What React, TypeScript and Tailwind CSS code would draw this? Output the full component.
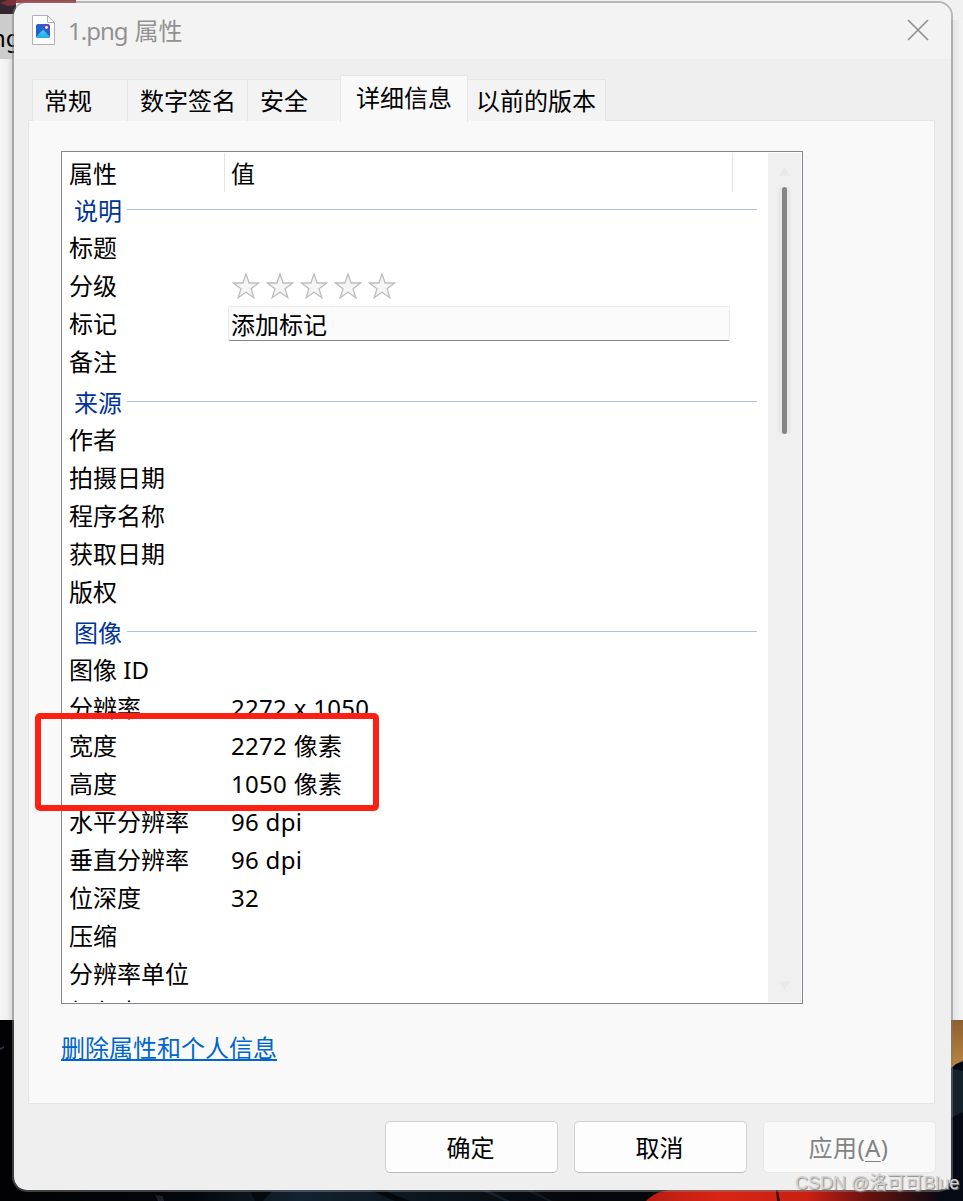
import React from 'react';

interface Property {
  name: string;
  value?: string;
  kind?: 'rating' | 'tags';
}

interface Section {
  title: string;
  rows: Property[];
}

const tabs = [
  { label: '常规', className: 'w-[95px] pl-[11px]' },
  { label: '数字签名', className: 'w-[120px] pl-[12px]' },
  { label: '安全', className: 'w-[93px] pl-[12px]' },
  { label: '详细信息', active: true, className: 'w-[128px] pl-[15px]' },
  { label: '以前的版本', className: 'w-[138px] pl-[8px]' },
];

const sections: Section[] = [
  {
    title: '说明',
    rows: [
      { name: '标题' },
      { name: '分级', kind: 'rating' },
      { name: '标记', kind: 'tags' },
      { name: '备注' },
    ],
  },
  {
    title: '来源',
    rows: [
      { name: '作者' },
      { name: '拍摄日期' },
      { name: '程序名称' },
      { name: '获取日期' },
      { name: '版权' },
    ],
  },
  {
    title: '图像',
    rows: [
      { name: '图像 ID' },
      { name: '分辨率', value: '2272 x 1050' },
      { name: '宽度', value: '2272 像素' },
      { name: '高度', value: '1050 像素' },
      { name: '水平分辨率', value: '96 dpi' },
      { name: '垂直分辨率', value: '96 dpi' },
      { name: '位深度', value: '32' },
      { name: '压缩' },
      { name: '分辨率单位' },
      { name: '颜色表示' },
    ],
  },
];

const Desktop: React.FC = () => (
  <svg className="absolute inset-0" width="963" height="1201" viewBox="0 0 963 1201">
    <defs>
      <linearGradient id="leftShade">
        <stop offset="0" stopColor="#f6f6f6" />
        <stop offset="0.5" stopColor="#f0f0f0" />
        <stop offset="1" stopColor="#d2d2d2" />
      </linearGradient>
      <linearGradient id="rightShade">
        <stop offset="0" stopColor="#dedede" />
        <stop offset="1" stopColor="#f5f5f5" />
      </linearGradient>
      <linearGradient id="amber" x1="0" y1="0" x2="0" y2="1">
        <stop offset="0" stopColor="#8b602f" />
        <stop offset="1" stopColor="#bd8641" />
      </linearGradient>
      <linearGradient id="red">
        <stop offset="0" stopColor="#b81d10" />
        <stop offset="0.25" stopColor="#d92415" />
        <stop offset="0.55" stopColor="#c82012" />
        <stop offset="0.75" stopColor="#6a120f" />
        <stop offset="1" stopColor="#0a0a12" />
      </linearGradient>
      <linearGradient id="night">
        <stop offset="0" stopColor="#020204" />
        <stop offset="0.2" stopColor="#03060a" />
        <stop offset="0.31" stopColor="#13222f" />
        <stop offset="0.45" stopColor="#0b141d" />
        <stop offset="0.6" stopColor="#050609" />
        <stop offset="1" stopColor="#060a14" />
      </linearGradient>
    </defs>
    <rect width="963" height="1201" fill="#f1f1f1" />
    <rect width="76" height="3" fill="#a34446" />
    <rect width="16" height="14" fill="#352631" />
    <path d="M0 3L8 0H16V5L8 6Z" fill="#7c3039" />
    <rect y="14" width="16" height="45" fill="#cccccc" />
    <rect y="59" width="14" height="962" fill="url(#leftShade)" />
    <rect x="950" y="20" width="13" height="1000" fill="url(#rightShade)" />
    <rect y="1020" width="963" height="181" fill="url(#night)" />
    <path d="M0 1048L4 1046V1048L0 1050Z" fill="#34383c" />
    <path d="M950 1020H963V1061L956 1064L950 1069Z" fill="url(#amber)" />
    <path d="M950 1068L963 1071V1112L950 1118Z" fill="#14222b" />
    <path d="M646 1201C652 1195 660 1190 672 1190H940V1201Z" fill="url(#red)" />
    <path d="M776 1190L777 1201H780L778 1190Z" fill="#3b0908" />
    <path d="M155 1195L163 1196L164 1201H158Z" fill="#1f1d27" />
    <path d="M250 1191H272L263 1201H255Z" fill="#05080c" />
    <path d="M370 1190L395 1201H410L382 1190Z" fill="#04070b" />
    <path d="M480 1190L505 1201H510L488 1190Z" fill="#16202a" />
    <path d="M525 1190L548 1201H552L532 1190Z" fill="#111a22" />
  </svg>
);

const FileIcon: React.FC = () => (
  <svg className="mb-[2px]" width="24" height="31" viewBox="0 0 24 31" fill="none">
    <defs>
      <linearGradient id="photo" x1="0" y1="1" x2="1" y2="0">
        <stop offset="0" stopColor="#0a62c9" />
        <stop offset="0.55" stopColor="#2563c8" />
        <stop offset="1" stopColor="#6a3fb8" />
      </linearGradient>
      <linearGradient id="hill" x1="0" y1="0" x2="0" y2="1">
        <stop offset="0" stopColor="#43cdf4" />
        <stop offset="1" stopColor="#22a7e8" />
      </linearGradient>
    </defs>
    <path d="M.5.5H15.5L22.5 7.5V29.5H.5Z" fill="#fdfdfd" stroke="#b1b1b1" />
    <path d="M15.5.5V7.5H22.5" stroke="#b1b1b1" />
    <rect x="4" y="9" width="14" height="14" rx="2" fill="url(#photo)" />
    <path d="M4.5 21.5L10 15.6Q11 14.6 12 15.6L17.5 21.5Q17 23 16 23H6Q5 23 4.5 21.5Z" fill="url(#hill)" />
    <circle cx="14.5" cy="12.5" r="1.4" fill="#f3eaff" />
  </svg>
);

const Rating: React.FC = () => (
  <div className="mb-[2px] flex gap-[6px] pl-px">
    {[1, 2, 3, 4, 5].map((n) => (
      <svg key={n} width="28" height="28" viewBox="0 0 28 28">
        <path
          d="M14 2L17.1 11H26.6L19.1 16.7L21.8 25.7L14 20.3L6.2 25.7L8.9 16.7L1.4 11H10.9Z"
          fill="#f5f5f5"
          stroke="#bdbdbd"
          strokeWidth="1.3"
        />
      </svg>
    ))}
  </div>
);

const PropertyRow: React.FC<{ row: Property }> = ({ row }) => (
  <div className="flex h-[38px] shrink-0 items-center">
    <div className="w-[162px] shrink-0 pb-[2px]">{row.name}</div>
    {row.kind === 'rating' && <Rating />}
    {row.kind === 'tags' && (
      <div className="-ml-[3px] mb-[3px] flex h-[35px] w-[502px] items-center rounded-[2px] border border-[#ebebeb] border-b-[#858585] bg-[#fafafa] pl-[2px] pt-[2px]">
        添加标记
      </div>
    )}
    {row.value && <div className="pb-[2px] tracking-[0.3px]">{row.value}</div>}
  </div>
);

const App: React.FC = () => {
  return (
    <div className="relative h-[1201px] w-[963px] overflow-hidden pl-3 pt-px font-['Noto_Sans','Noto_Sans_CJK_SC',sans-serif] text-2xl leading-[36px] text-black">
      <Desktop />
      <div className="absolute -left-[9px] top-[20px]">ng</div>

      <div className="relative flex h-[1191px] w-[941px] flex-col overflow-hidden rounded-[15px] border-2 border-[#7b7b7b]/50 bg-[#efefef] bg-clip-padding">
        <div className="flex h-14 shrink-0 items-center bg-[#f3f3f3] pl-[18px] pr-[22px] text-[#929292]">
          <FileIcon />
          <h1 className="ml-[12px] flex-1 pb-px">
            <span className="mr-[7px] tracking-[-1px]">1.png</span>
            属性
          </h1>
          <svg className="mb-[2px]" width="22" height="22" viewBox="0 0 22 22" fill="none" stroke="#919191" strokeWidth="1.7">
            <path d="M1 1L21 21M21 1L1 21" />
          </svg>
        </div>

        <div className="relative z-10 mt-4 flex h-[46px] shrink-0 items-end pl-[18px]">
          {tabs.map((tab) =>
            tab.active ? (
              <div
                key={tab.label}
                className={`h-[47px] -mb-px border border-b-0 border-[#e5e5e5] bg-[#f9f9f9] pt-[4px] ${tab.className}`}
              >
                {tab.label}
              </div>
            ) : (
              <div
                key={tab.label}
                className={`h-[42px] border-t border-l border-[#e5e5e5] bg-[#f3f3f3] pt-[3px] last:border-l-0 last:border-r ${tab.className}`}
              >
                {tab.label}
              </div>
            )
          )}
        </div>

        <div className="-mt-px ml-[14px] flex h-[984px] w-[907px] shrink-0 flex-col items-start border border-[#e5e5e5] bg-[#f9f9f9] pl-8 pt-[30px]">
          <div className="flex h-[853px] w-[742px] shrink-0 border border-[#828790] bg-white p-px">
            <div className="flex h-[849px] w-[706px] flex-col overflow-hidden pl-[6px]">
              <div className="flex h-[39px] shrink-0">
                <div className="w-[155px] pt-[3px]">属性</div>
                <div className="w-[509px] border-x border-[#e3e3e3] pl-[6px] pt-[3px]">值</div>
              </div>
              {sections.map((section, i) => (
                <React.Fragment key={section.title}>
                  <div className={`flex shrink-0 items-center pl-[5px] text-[#003399] ${i === 0 ? 'h-[38px] pb-[1px]' : 'h-[40px] pt-px'}`}>
                    {section.title}
                    <div className="mb-[3px] ml-[5px] h-px w-[630px] bg-[#b3bfdc]" />
                  </div>
                  {section.rows.map((row) => (
                    <PropertyRow key={row.name} row={row} />
                  ))}
                </React.Fragment>
              ))}
            </div>
            <div className="flex h-[849px] w-[33px] flex-col items-center bg-[#f0f0f0] pt-[14px]">
              <svg width="11" height="9" viewBox="0 0 12 9">
                <path d="M6 0L12 9H0Z" fill="#e8e8e8" />
              </svg>
              <div className="mt-[11px] flex h-[247px] w-[13px] justify-center rounded bg-[#e9e9e9]">
                <div className="w-[5px] rounded-full bg-[#858585]" />
              </div>
              <svg className="mt-auto mb-3" width="11" height="9" viewBox="0 0 12 9">
                <path d="M0 0H12L6 9Z" fill="#e8e8e8" />
              </svg>
            </div>
          </div>
          <a className="mt-[26px] text-[#0066cc] underline decoration-2 underline-offset-2 [text-decoration-skip-ink:none]">
            删除属性和个人信息
          </a>
        </div>

        <div className="mt-[17px] flex justify-end gap-4 pr-[15px]">
          <button className="h-[52px] w-[173px] rounded-[5px] border border-[#d0d0d0] border-b-[#bababa] bg-[#fdfdfd] pr-[2px] pt-[2px]">
            确定
          </button>
          <button className="h-[52px] w-[173px] rounded-[5px] border border-[#d0d0d0] border-b-[#bababa] bg-[#fdfdfd] pr-[2px] pt-[2px]">
            取消
          </button>
          <button className="h-[52px] w-[173px] rounded-[5px] border border-[#e8e8e8] bg-[#f9f9f9] pr-[2px] pt-px tracking-[0.4px] text-[#838383]">
            应用(<u className="decoration-1 underline-offset-4">A</u>)
          </button>
        </div>
      </div>

      <div className="absolute left-[35px] top-[713px] h-[98px] w-[344px] rounded-[5px] border-[6px] border-[#ff2014]" />
      <div className="absolute left-[795px] top-[1171px] whitespace-nowrap font-['Liberation_Sans','Noto_Sans_CJK_SC',sans-serif] text-[18px] leading-[24px] text-[#d2d2d2] [text-shadow:1px_1px_1px_#888888]">
        CSDN @洛可可Blue
      </div>
    </div>
  );
};

export default App;
